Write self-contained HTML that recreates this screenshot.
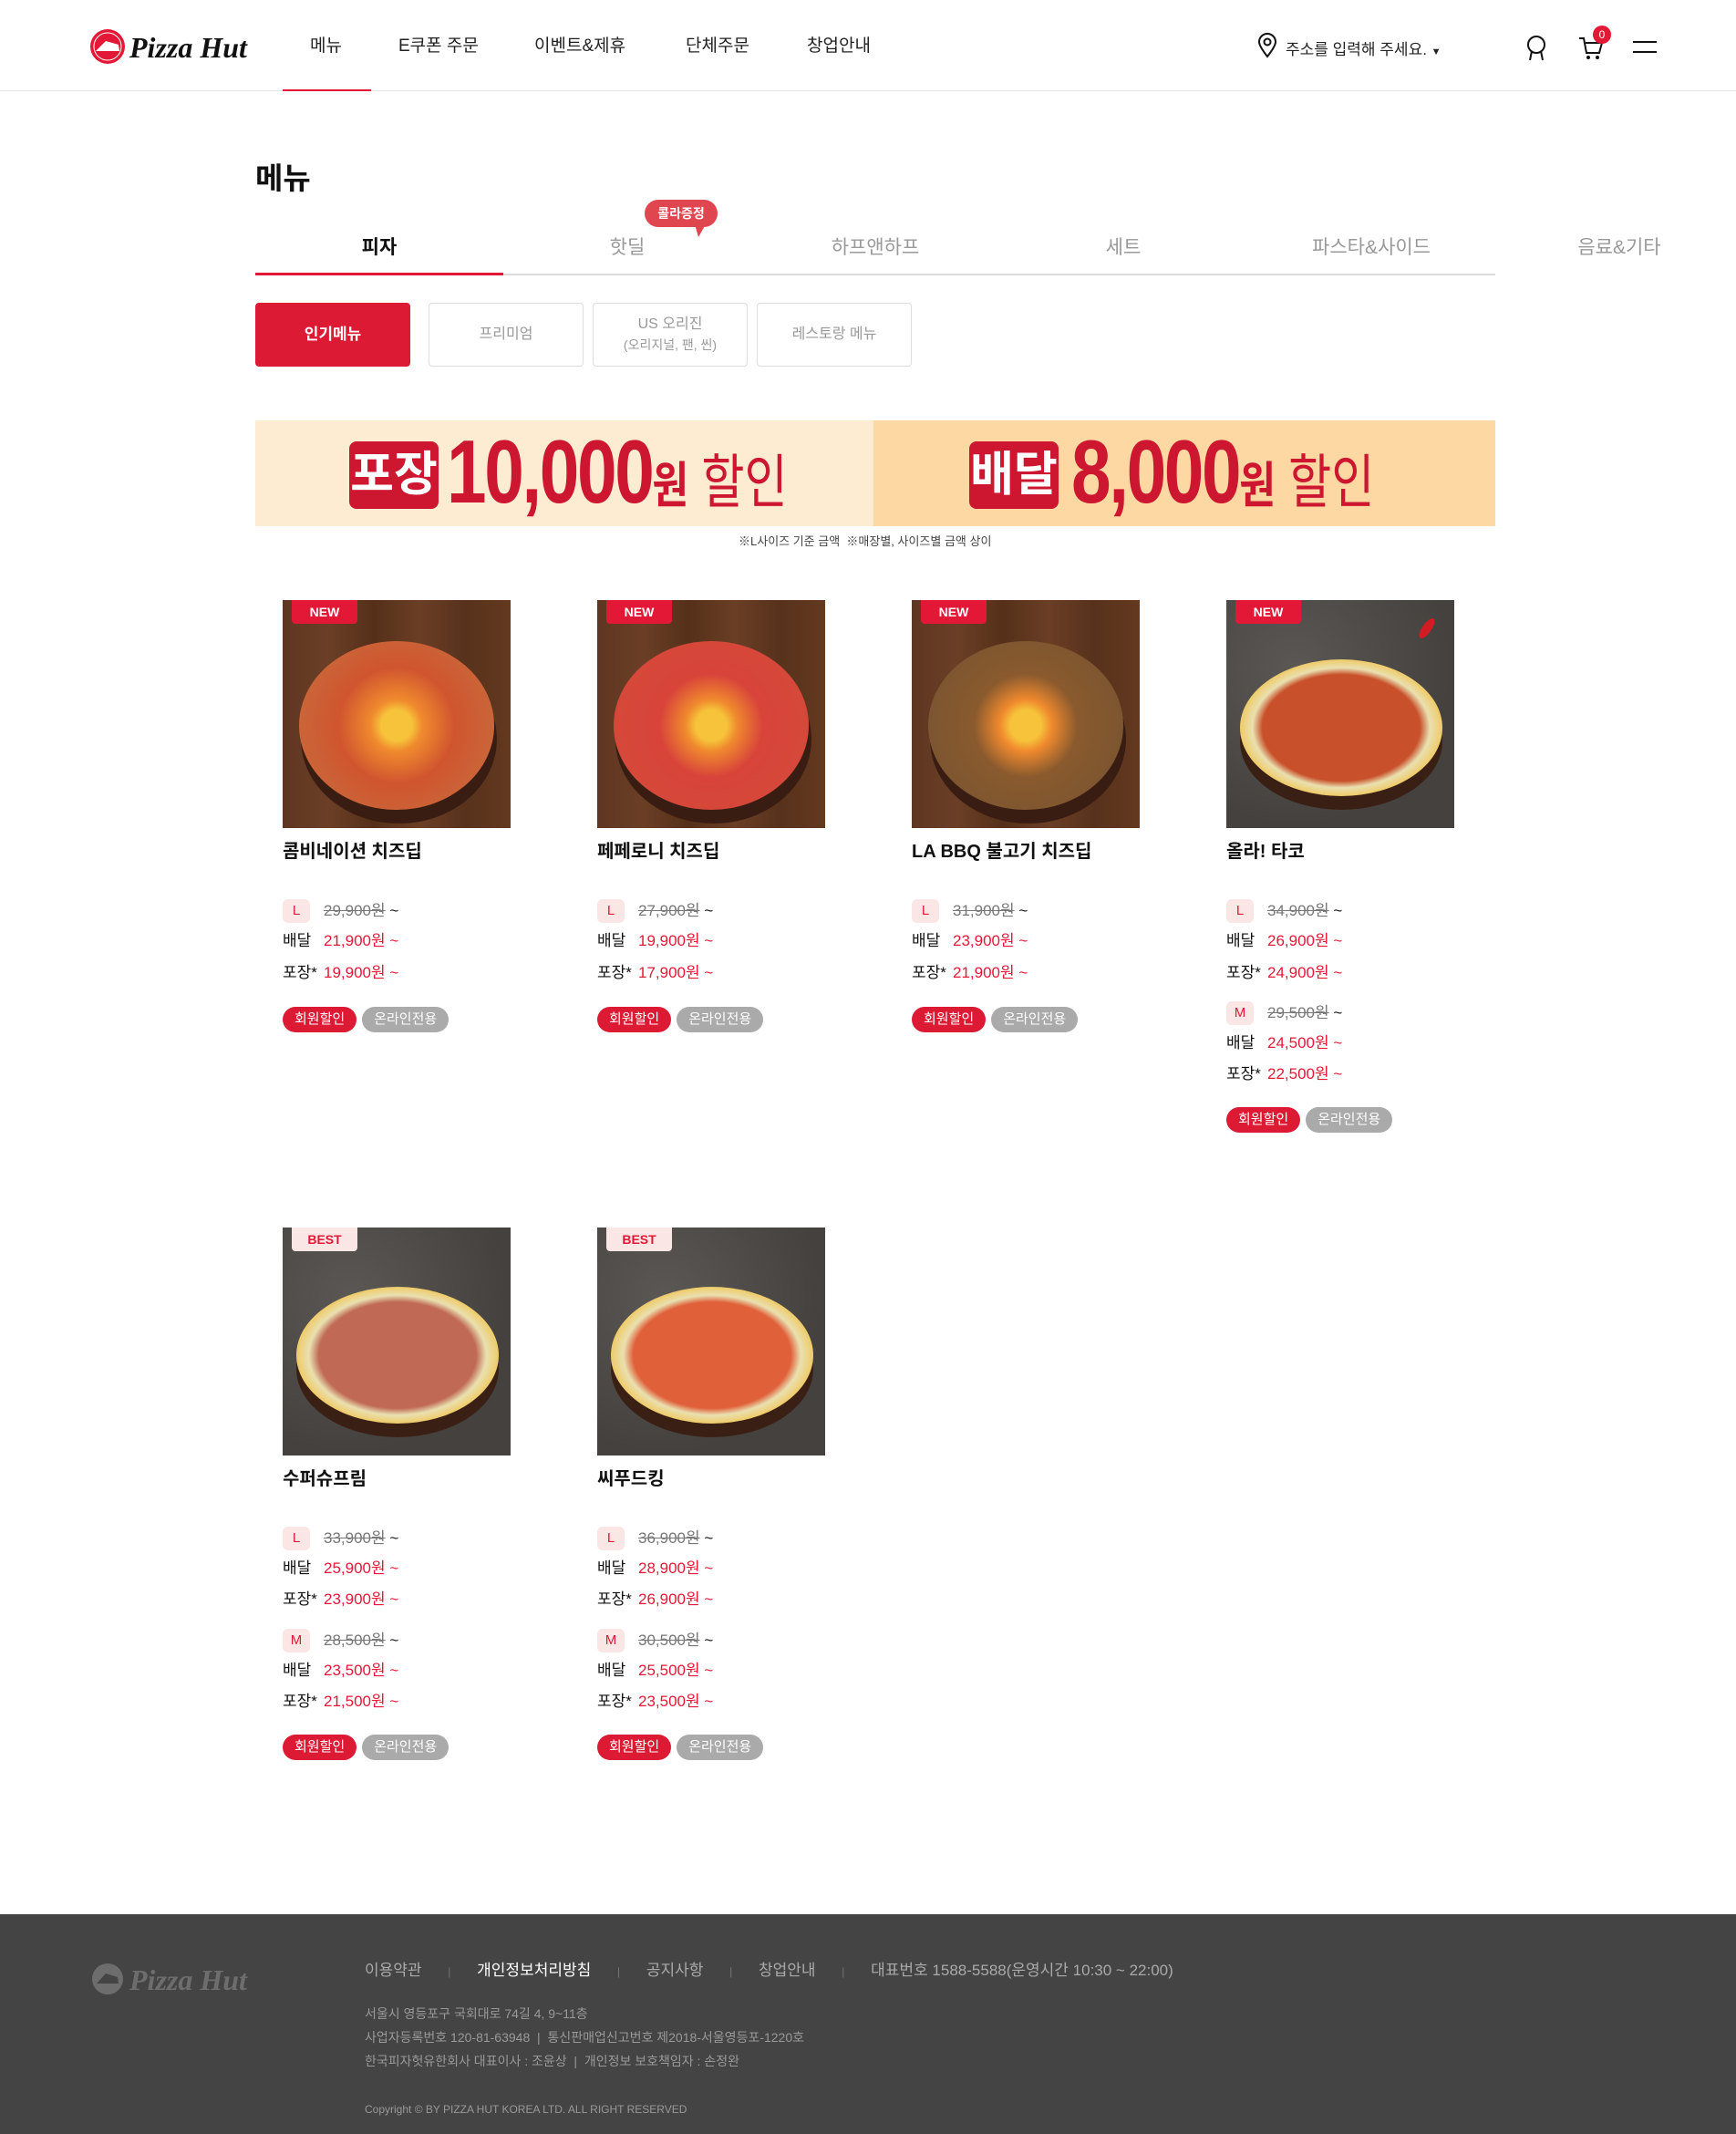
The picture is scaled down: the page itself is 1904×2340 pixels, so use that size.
<!DOCTYPE html>
<html><head><meta charset="utf-8"><style>
*{margin:0;padding:0;box-sizing:border-box}
body{width:1904px;height:2340px;position:relative;background:#fff;font-family:"Liberation Sans","Noto Sans CJK KR",sans-serif;color:#111;overflow:hidden}
.a{position:absolute;white-space:nowrap}
.nav{top:39px;font-size:19px;color:#222;line-height:24px}
.tab{top:258px;font-size:21px;color:#999;width:272px;text-align:center;line-height:28px}
.sb{top:331px;height:70px;width:170px;border:1px solid #ddd;border-radius:4px;text-align:center;font-size:16px;color:#999;display:flex;align-items:center;justify-content:center;line-height:22px}
.img{width:250px;height:250px;overflow:hidden}
.wood{background:linear-gradient(90deg,#5e3621,#6b3f26 20%,#553019 40%,#6a3e25 60%,#58321c 80%,#63391f)}
.stone{background:radial-gradient(circle at 30% 30%,#5a5754,#44413e 70%)}
.tag{position:absolute;left:10px;top:0;width:72px;height:26px;border-radius:0 0 4px 4px;font-size:14px;font-weight:bold;text-align:center;line-height:26px}
.new{background:#e31837;color:#fff}.best{background:#fbe6e6;color:#e31837}
.nm{font-size:20px;font-weight:bold;color:#111;line-height:26px}
.row{font-size:17px;line-height:26px;height:26px}
.sz{display:inline-block;width:30px;height:26px;background:#fbe6e6;color:#e31837;border-radius:6px;text-align:center;font-size:15px;margin-right:15px;vertical-align:top}
.old{color:#777;text-decoration:line-through}
.red{color:#e31837}
.lb{display:inline-block;width:45px}
.pill{display:inline-block;height:28px;line-height:28px;border-radius:14px;color:#fff;font-size:15px;padding:0 13px;margin-right:6px}
.foot{background:#444;position:absolute;left:0;top:2099px;width:1904px;height:241px}
.fl{font-size:17px;color:#aaa}
.fa{font-size:14px;color:#999}
</style></head><body>
<div class="a" style="left:98px;top:30px">
<svg width="182" height="42" viewBox="0 0 182 42"><circle cx="20" cy="21" r="19" fill="#e31837"/><circle cx="20" cy="21" r="15" fill="none" stroke="#fff" stroke-width="1"/><path d="M7 26 L18 15 L32 19 L33 26 Z" fill="#fff"/><text x="44" y="33" font-family="Liberation Serif" font-style="italic" font-weight="bold" font-size="32" fill="#111">Pizza Hut</text></svg></div>
<div class="a nav" style="left:340px">메뉴</div>
<div class="a nav" style="left:437px">E쿠폰 주문</div>
<div class="a nav" style="left:586px">이벤트&amp;제휴</div>
<div class="a nav" style="left:752px">단체주문</div>
<div class="a nav" style="left:885px">창업안내</div>
<div class="a" style="left:1378px;top:36px"><svg width="24" height="28" viewBox="0 0 24 28"><path d="M12 26 C5 17 3 13 3 10 A9 9 0 0 1 21 10 C21 13 19 17 12 26Z" fill="none" stroke="#111" stroke-width="2"/><circle cx="12" cy="10" r="3.5" fill="none" stroke="#111" stroke-width="2"/></svg></div>
<div class="a" style="left:1410px;top:40px;font-size:17px;color:#222">주소를 입력해 주세요. <span style="font-size:11px">▼</span></div>
<div class="a" style="left:1672px;top:38px"><svg width="26" height="30" viewBox="0 0 26 30"><circle cx="13" cy="11" r="9" fill="none" stroke="#111" stroke-width="2"/><path d="M8 18 L6 28 M18 18 L20 28" stroke="#111" stroke-width="2"/></svg></div>
<div class="a" style="left:1730px;top:38px"><svg width="30" height="28" viewBox="0 0 30 28"><path d="M2 4 H7 L10 20 H24 L27 9 H9" fill="none" stroke="#111" stroke-width="2"/><circle cx="12" cy="25" r="2" fill="#111"/><circle cx="22" cy="25" r="2" fill="#111"/></svg></div>
<div class="a" style="left:1747px;top:28px;width:20px;height:20px;border-radius:50%;background:#e31837;color:#fff;font-size:12px;text-align:center;line-height:20px">0</div>
<div class="a" style="left:1791px;top:45px;width:26px;height:2px;background:#111"></div>
<div class="a" style="left:1791px;top:56px;width:26px;height:2px;background:#111"></div>
<div class="a" style="left:0;top:99px;width:1904px;height:1px;background:#e8e8e8"></div>
<div class="a" style="left:310px;top:98px;width:97px;height:2px;background:#e31837"></div>

<div class="a" style="left:280px;top:175px;font-size:33px;font-weight:bold;line-height:42px">메뉴</div>
<div class="a" style="left:707px;top:219px;width:80px;height:30px;background:#e0464f;border-radius:15px;color:#fff;font-size:14px;font-weight:bold;text-align:center;line-height:30px">콜라증정</div>
<div class="a" style="left:762px;top:246px;width:0;height:0;border-left:4px solid transparent;border-right:8px solid transparent;border-top:14px solid #e0464f"></div>
<div class="a tab" style="left:280px;color:#111;font-weight:bold">피자</div>
<div class="a tab" style="left:552px">핫딜</div>
<div class="a tab" style="left:824px">하프앤하프</div>
<div class="a tab" style="left:1096px">세트</div>
<div class="a tab" style="left:1368px">파스타&amp;사이드</div>
<div class="a tab" style="left:1640px">음료&amp;기타</div>
<div class="a" style="left:280px;top:300px;width:1360px;height:2px;background:#ddd"></div>
<div class="a" style="left:280px;top:299px;width:272px;height:3px;background:#e31837"></div>

<div class="a sb" style="left:280px;background:#dc1a33;border-color:#dc1a33;color:#fff;font-weight:bold;font-size:17px;top:332px">인기메뉴</div>
<div class="a sb" style="left:470px;top:332px">프리미엄</div>
<div class="a sb" style="left:650px;top:332px;flex-direction:column">US 오리진<br><span style="font-size:14px">(오리지널, 팬, 씬)</span></div>
<div class="a sb" style="left:830px;top:332px">레스토랑 메뉴</div>

<div class="a" style="left:280px;top:461px;width:678px;height:116px;background:#fdebd2"></div>
<div class="a" style="left:958px;top:461px;width:682px;height:116px;background:#fdd8a2"></div>
<div class="a" style="left:383px;top:484px;width:98px;height:74px;background:#cd1630;border-radius:8px;color:#fff;font-size:52px;font-weight:bold;text-align:center;line-height:74px">포장</div>
<div class="a" style="left:490px;top:462px;color:#cd1630;font-size:98px;font-weight:bold;letter-spacing:-3px;line-height:110px;transform:scaleX(.8);transform-origin:left">10,000<span style="font-size:54px;letter-spacing:0">원</span><span style="font-size:64px;font-weight:normal;letter-spacing:0"> 할인</span></div>
<div class="a" style="left:1063px;top:484px;width:98px;height:74px;background:#cd1630;border-radius:8px;color:#fff;font-size:52px;font-weight:bold;text-align:center;line-height:74px">배달</div>
<div class="a" style="left:1175px;top:462px;color:#cd1630;font-size:98px;font-weight:bold;letter-spacing:-3px;line-height:110px;transform:scaleX(.8);transform-origin:left">8,000<span style="font-size:54px;letter-spacing:0">원</span><span style="font-size:64px;font-weight:normal;letter-spacing:0"> 할인</span></div>
<div class="a" style="left:810px;top:583px;font-size:13px;color:#444">※L사이즈 기준 금액 &nbsp;※매장별, 사이즈별 금액 상이</div>

<!-- P1 -->
<div class="a img wood" style="left:310px;top:658px"><div style="position:absolute;left:20px;top:60px;width:215px;height:185px;border-radius:50%;background:#3a1d12"></div><div style="position:absolute;left:18px;top:45px;width:214px;height:185px;border-radius:50%;background:radial-gradient(circle,#f6c33a 0 12%,#f08a2e 20%,#d0552f 45%,#c9683a 80%,#d9944f 92%)"></div><div class="tag new">NEW</div></div>
<div class="a nm" style="left:310px;top:921px">콤비네이션 치즈딥</div>
<div class="a row" style="left:310px;top:986px"><span class="sz">L</span><span class="old">29,900원</span> ~</div>
<div class="a row" style="left:310px;top:1019px"><span class="lb">배달</span><span class="red">21,900원 ~</span></div>
<div class="a row" style="left:310px;top:1054px"><span class="lb">포장*</span><span class="red">19,900원 ~</span></div>
<div class="a" style="left:310px;top:1104px"><span class="pill" style="background:#dc1a33">회원할인</span><span class="pill" style="background:#aaa">온라인전용</span></div>
<!-- P2 -->
<div class="a img wood" style="left:655px;top:658px"><div style="position:absolute;left:20px;top:60px;width:215px;height:185px;border-radius:50%;background:#3a1d12"></div><div style="position:absolute;left:18px;top:45px;width:214px;height:185px;border-radius:50%;background:radial-gradient(circle,#f6c33a 0 12%,#f08a2e 20%,#d8443a 40%,#d4493a 80%,#d9944f 92%)"></div><div class="tag new">NEW</div></div>
<div class="a nm" style="left:655px;top:921px">페페로니 치즈딥</div>
<div class="a row" style="left:655px;top:986px"><span class="sz">L</span><span class="old">27,900원</span> ~</div>
<div class="a row" style="left:655px;top:1019px"><span class="lb">배달</span><span class="red">19,900원 ~</span></div>
<div class="a row" style="left:655px;top:1054px"><span class="lb">포장*</span><span class="red">17,900원 ~</span></div>
<div class="a" style="left:655px;top:1104px"><span class="pill" style="background:#dc1a33">회원할인</span><span class="pill" style="background:#aaa">온라인전용</span></div>
<!-- P3 -->
<div class="a img wood" style="left:1000px;top:658px"><div style="position:absolute;left:20px;top:60px;width:215px;height:185px;border-radius:50%;background:#3a1d12"></div><div style="position:absolute;left:18px;top:45px;width:214px;height:185px;border-radius:50%;background:radial-gradient(circle,#f6c33a 0 12%,#f08a2e 20%,#8a5a2e 40%,#7a5530 80%,#d9944f 92%)"></div><div class="tag new">NEW</div></div>
<div class="a nm" style="left:1000px;top:921px">LA BBQ 불고기 치즈딥</div>
<div class="a row" style="left:1000px;top:986px"><span class="sz">L</span><span class="old">31,900원</span> ~</div>
<div class="a row" style="left:1000px;top:1019px"><span class="lb">배달</span><span class="red">23,900원 ~</span></div>
<div class="a row" style="left:1000px;top:1054px"><span class="lb">포장*</span><span class="red">21,900원 ~</span></div>
<div class="a" style="left:1000px;top:1104px"><span class="pill" style="background:#dc1a33">회원할인</span><span class="pill" style="background:#aaa">온라인전용</span></div>
<!-- P4 -->
<div class="a img stone" style="left:1345px;top:658px"><div style="position:absolute;left:15px;top:80px;width:222px;height:150px;border-radius:50%;background:#3a2014"></div><div style="position:absolute;left:15px;top:65px;width:222px;height:150px;border-radius:50%;background:radial-gradient(ellipse,#c8502a 0 55%,#e9e0b0 62%,#f2c045 75%,#f6b830 90%)"></div><div class="tag new">NEW</div><div style="position:absolute;left:215px;top:18px;width:10px;height:26px;background:#d01c22;border-radius:50%;transform:rotate(35deg)"></div></div>
<div class="a nm" style="left:1345px;top:921px">올라! 타코</div>
<div class="a row" style="left:1345px;top:986px"><span class="sz">L</span><span class="old">34,900원</span> ~</div>
<div class="a row" style="left:1345px;top:1019px"><span class="lb">배달</span><span class="red">26,900원 ~</span></div>
<div class="a row" style="left:1345px;top:1054px"><span class="lb">포장*</span><span class="red">24,900원 ~</span></div>
<div class="a row" style="left:1345px;top:1098px"><span class="sz">M</span><span class="old">29,500원</span> ~</div>
<div class="a row" style="left:1345px;top:1131px"><span class="lb">배달</span><span class="red">24,500원 ~</span></div>
<div class="a row" style="left:1345px;top:1165px"><span class="lb">포장*</span><span class="red">22,500원 ~</span></div>
<div class="a" style="left:1345px;top:1214px"><span class="pill" style="background:#dc1a33">회원할인</span><span class="pill" style="background:#aaa">온라인전용</span></div>
<!-- P5 -->
<div class="a img stone" style="left:310px;top:1346px"><div style="position:absolute;left:15px;top:80px;width:222px;height:150px;border-radius:50%;background:#3a2014"></div><div style="position:absolute;left:15px;top:65px;width:222px;height:150px;border-radius:50%;background:radial-gradient(ellipse,#c06a55 0 55%,#e9e0b0 62%,#f2c045 75%,#f6b830 90%)"></div><div class="tag best">BEST</div></div>
<div class="a nm" style="left:310px;top:1609px">수퍼슈프림</div>
<div class="a row" style="left:310px;top:1674px"><span class="sz">L</span><span class="old">33,900원</span> ~</div>
<div class="a row" style="left:310px;top:1707px"><span class="lb">배달</span><span class="red">25,900원 ~</span></div>
<div class="a row" style="left:310px;top:1741px"><span class="lb">포장*</span><span class="red">23,900원 ~</span></div>
<div class="a row" style="left:310px;top:1786px"><span class="sz">M</span><span class="old">28,500원</span> ~</div>
<div class="a row" style="left:310px;top:1819px"><span class="lb">배달</span><span class="red">23,500원 ~</span></div>
<div class="a row" style="left:310px;top:1853px"><span class="lb">포장*</span><span class="red">21,500원 ~</span></div>
<div class="a" style="left:310px;top:1902px"><span class="pill" style="background:#dc1a33">회원할인</span><span class="pill" style="background:#aaa">온라인전용</span></div>
<!-- P6 -->
<div class="a img stone" style="left:655px;top:1346px"><div style="position:absolute;left:15px;top:80px;width:222px;height:150px;border-radius:50%;background:#3a2014"></div><div style="position:absolute;left:15px;top:65px;width:222px;height:150px;border-radius:50%;background:radial-gradient(ellipse,#e0603a 0 55%,#e9e0b0 62%,#f2c045 75%,#f6b830 90%)"></div><div class="tag best">BEST</div></div>
<div class="a nm" style="left:655px;top:1609px">씨푸드킹</div>
<div class="a row" style="left:655px;top:1674px"><span class="sz">L</span><span class="old">36,900원</span> ~</div>
<div class="a row" style="left:655px;top:1707px"><span class="lb">배달</span><span class="red">28,900원 ~</span></div>
<div class="a row" style="left:655px;top:1741px"><span class="lb">포장*</span><span class="red">26,900원 ~</span></div>
<div class="a row" style="left:655px;top:1786px"><span class="sz">M</span><span class="old">30,500원</span> ~</div>
<div class="a row" style="left:655px;top:1819px"><span class="lb">배달</span><span class="red">25,500원 ~</span></div>
<div class="a row" style="left:655px;top:1853px"><span class="lb">포장*</span><span class="red">23,500원 ~</span></div>
<div class="a" style="left:655px;top:1902px"><span class="pill" style="background:#dc1a33">회원할인</span><span class="pill" style="background:#aaa">온라인전용</span></div>

<div class="foot">
<div class="a" style="left:98px;top:50px;opacity:.35">
<svg width="182" height="42" viewBox="0 0 182 42"><circle cx="20" cy="21" r="17" fill="#bbb"/><path d="M8 26 L18 15 L31 19 L32 26 Z" fill="#444"/><text x="44" y="33" font-family="Liberation Serif" font-style="italic" font-weight="bold" font-size="32" fill="#bbb">Pizza Hut</text></svg></div>
<div class="a fl" style="left:400px;top:47px">이용약관 <span style="margin:0 24px;color:#777;font-size:12px">|</span> <span style="color:#fff">개인정보처리방침</span> <span style="margin:0 24px;color:#777;font-size:12px">|</span> 공지사항 <span style="margin:0 24px;color:#777;font-size:12px">|</span> 창업안내 <span style="margin:0 24px;color:#777;font-size:12px">|</span> 대표번호 1588-5588(운영시간 10:30 ~ 22:00)</div>
<div class="a fa" style="left:400px;top:99px">서울시 영등포구 국회대로 74길 4, 9~11층</div>
<div class="a fa" style="left:400px;top:125px">사업자등록번호 120-81-63948 &nbsp;| &nbsp;통신판매업신고번호 제2018-서울영등포-1220호</div>
<div class="a fa" style="left:400px;top:151px">한국피자헛유한회사 대표이사 : 조윤상 &nbsp;| &nbsp;개인정보 보호책임자 : 손정완</div>
<div class="a" style="left:400px;top:207px;font-size:12px;color:#999">Copyright © BY PIZZA HUT KOREA LTD. ALL RIGHT RESERVED</div>
</div>
</body></html>
